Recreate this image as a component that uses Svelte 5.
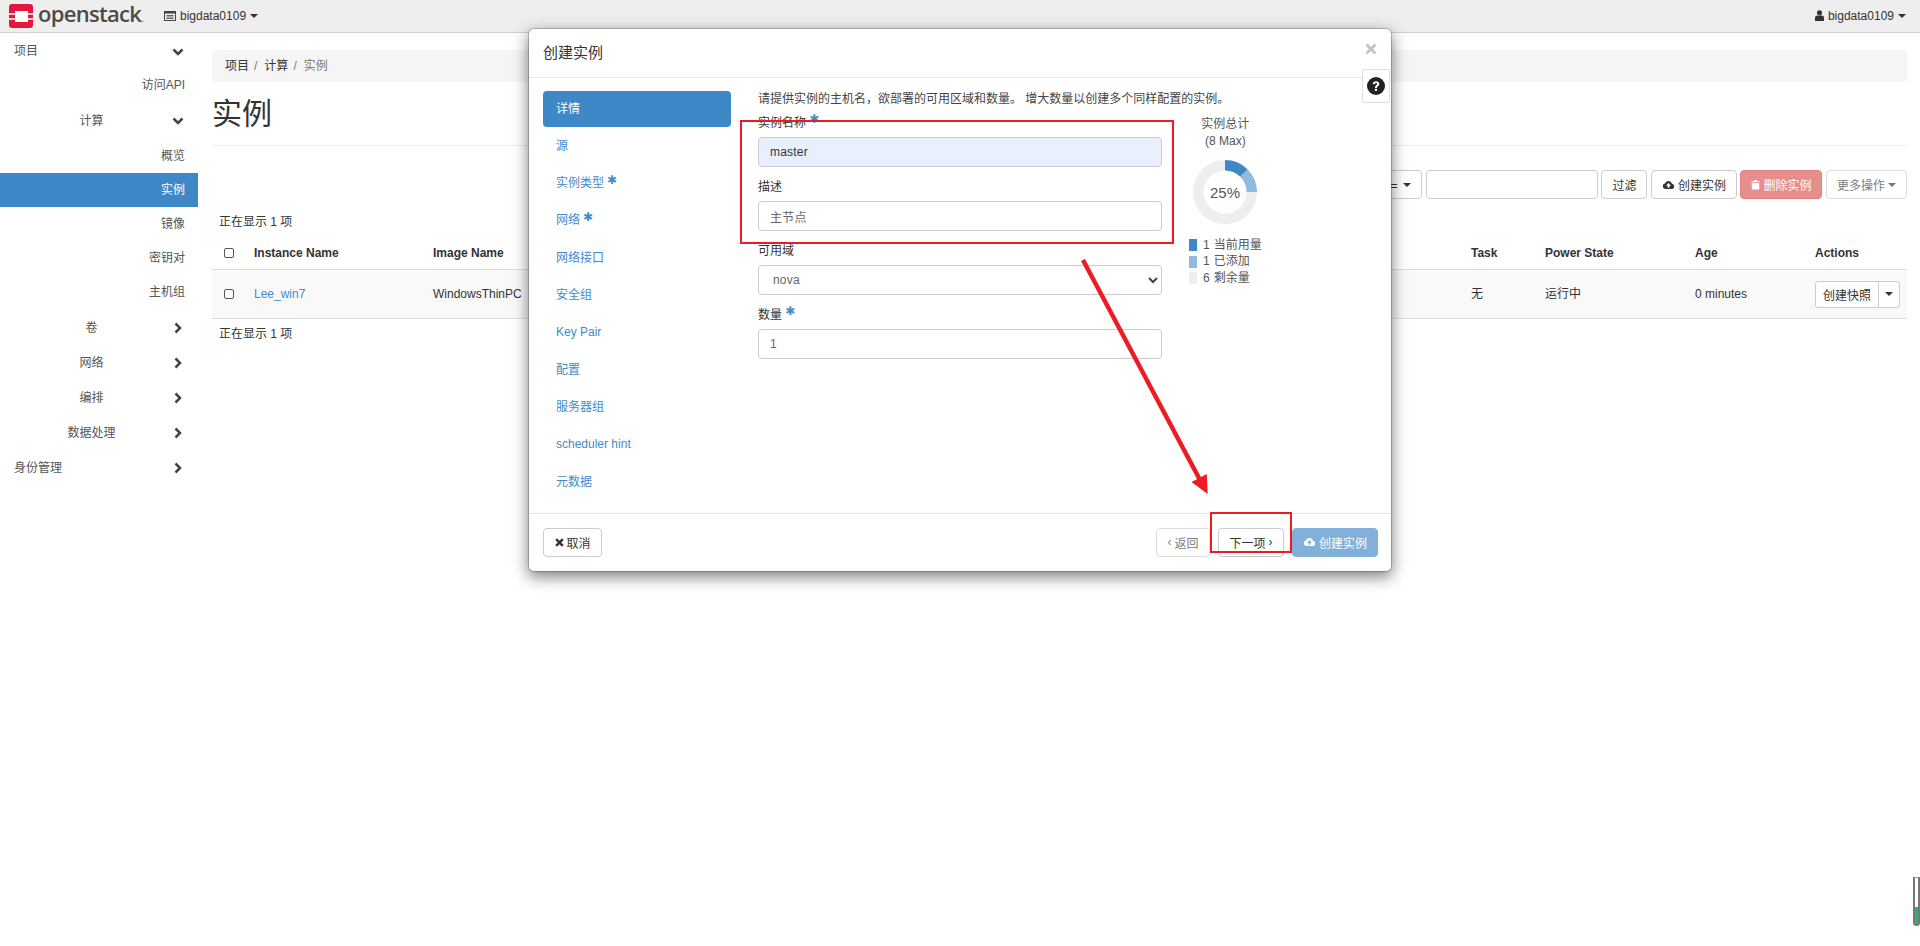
<script lang="ts">
	const sideItems = [
		{ label: '项目', level: 0, open: true },
		{ label: '访问API', level: 2 },
		{ label: '计算', level: 1, open: true },
		{ label: '概览', level: 2, first: true },
		{ label: '实例', level: 2, active: true },
		{ label: '镜像', level: 2 },
		{ label: '密钥对', level: 2 },
		{ label: '主机组', level: 2 },
		{ label: '卷', level: 1 },
		{ label: '网络', level: 1 },
		{ label: '编排', level: 1 },
		{ label: '数据处理', level: 1 },
		{ label: '身份管理', level: 0 }
	];

	const steps = [
		{ label: '详情', active: true },
		{ label: '源' },
		{ label: '实例类型', required: true },
		{ label: '网络', required: true },
		{ label: '网络接口' },
		{ label: '安全组' },
		{ label: 'Key Pair' },
		{ label: '配置' },
		{ label: '服务器组' },
		{ label: 'scheduler hint' },
		{ label: '元数据' }
	];

	const legend = [
		{ n: 1, label: '当前用量', color: '#3f88c8' },
		{ n: 1, label: '已添加', color: '#8fbbe0' },
		{ n: 6, label: '剩余量', color: '#eeeeee' }
	];

	const cloudPath = 'M1 8.5C1 6.8 2.2 5.5 3.8 5.3 4.3 3.4 6 2 8 2c2.100 0 3.800 1.500 4.200 3.500C13.800 5.700 15 7 15 8.700 15 10.500 13.500 12 11.700 12H4.300C2.500 12 1 10.400 1 8.500Z';
</script>

{#snippet cloud()}
	<svg viewBox="0 0 16 14" width="13" height="12">
		<path d={cloudPath} fill="currentColor" />
		<path d="M8 4.500 11 7.800H9.100V10.500H6.900V7.800H5Z" fill="var(--cut, #fff)" />
	</svg>
{/snippet}

<div class="page">
	<header class="navbar">
		<div class="logo">
			<svg viewBox="0 0 24 24" width="24" height="24">
				<rect width="24" height="24" rx="3" fill="#e3173e" />
				<rect x="6" y="7" width="13" height="11" fill="#fff" />
				<rect x="0" y="9.250" width="6" height="1.500" fill="#fff" />
				<rect x="0" y="14.250" width="6" height="1.500" fill="#fff" />
				<rect x="19" y="9.250" width="5" height="1.500" fill="#fff" />
				<rect x="19" y="14.250" width="5" height="1.500" fill="#fff" />
			</svg>
			<span class="logo-text">openstack<small>.</small></span>
		</div>
		<div class="project-pick">
			<svg viewBox="0 0 12 10" width="12" height="10">
				<rect x="0.500" y="0.500" width="11" height="9" fill="none" stroke="#444" />
				<rect x="0.500" y="0.500" width="11" height="2" fill="#444" />
				<path d="M2.500 4.500h7M2.500 6h7M2.500 7.500h7" stroke="#444" stroke-width="0.800" />
			</svg>
			<span>bigdata0109</span>
			<i class="caret"></i>
		</div>
		<div class="user-pick">
			<svg viewBox="0 0 10 12" width="9" height="11">
				<circle cx="5" cy="3" r="2.800" fill="#333" />
				<path d="M0 12V8.500C0 7 1.500 6 2.800 6h4.400C8.500 6 10 7 10 8.500V12Z" fill="#333" />
			</svg>
			<span>bigdata0109</span>
			<i class="caret"></i>
		</div>
	</header>

	<div class="layout">
		<nav class="sidebar">
			{#each sideItems as item}
				<div
					class="side-row level-{item.level}"
					class:active={item.active}
					class:first={item.first}
				>
					<span class="side-label">{item.label}</span>
					{#if item.level < 2}
						<svg class="chev" viewBox="0 0 12 12" width="12" height="12">
							{#if item.open}
								<path d="M1.500 3.500l4.500 4.500 4.500-4.500" fill="none" stroke="#444" stroke-width="2.500" />
							{:else}
								<path d="M3.500 1.500l4.500 4.500-4.500 4.500" fill="none" stroke="#444" stroke-width="2.500" />
							{/if}
						</svg>
					{/if}
				</div>
			{/each}
		</nav>

		<main class="content">
			<ol class="crumbs">
				<li>项目<span class="sep">/</span></li>
				<li>计算<span class="sep">/</span></li>
				<li class="current">实例</li>
			</ol>
			<div class="page-header"><h1>实例</h1></div>

			<div class="toolbar">
				<button class="btn filter-pick">实例名称 = <i class="caret"></i></button>
				<input class="filter" type="text" />
				<button class="btn">过滤</button>
				<button class="btn">{@render cloud()}创建实例</button>
				<button class="btn danger" disabled>
					<svg viewBox="0 0 12 13" width="9" height="11">
						<path d="M1 4h10v8a1 1 0 0 1-1 1H2a1 1 0 0 1-1-1ZM0 2h4V0.500h4V2h4v1H0Z" fill="#fff" />
					</svg>
					删除实例
				</button>
				<button class="btn" disabled>更多操作<i class="caret"></i></button>
			</div>

			<p class="count first-count">正在显示 1 项</p>
			<table>
				<colgroup>
					<col class="c-check" />
					<col class="c-name" />
					<col />
					<col class="c-task" />
					<col class="c-power" />
					<col class="c-age" />
					<col class="c-actions" />
				</colgroup>
				<thead>
					<tr>
						<th><input class="check" type="checkbox" /></th>
						<th>Instance Name</th>
						<th>Image Name</th>
						<th>Task</th>
						<th>Power State</th>
						<th>Age</th>
						<th>Actions</th>
					</tr>
				</thead>
				<tbody>
					<tr>
						<td><input class="check" type="checkbox" /></td>
						<td><a href="#instance">Lee_win7</a></td>
						<td>WindowsThinPC</td>
						<td>无</td>
						<td>运行中</td>
						<td>0 minutes</td>
						<td>
							<div class="split">
								<button class="btn">创建快照</button>
								<button class="btn toggle" aria-label="更多"><i class="caret"></i></button>
							</div>
						</td>
					</tr>
				</tbody>
			</table>
			<p class="count last-count">正在显示 1 项</p>
		</main>
	</div>

	<section class="modal">
		<div class="modal-head">
			<h4>创建实例</h4>
			<svg class="close" viewBox="0 0 12 12" width="12" height="12">
				<path d="M1.500 1.500l9 9M10.500 1.500l-9 9" stroke="#c4c4c4" stroke-width="3" />
			</svg>
		</div>

		<button class="help" aria-label="帮助">
			<svg viewBox="0 0 18 18" width="18" height="18">
				<circle cx="9" cy="9" r="9" fill="#222" />
				<path d="M5.800 7C6 5 7.400 4.200 9.100 4.200c1.800 0 3.200 1 3.200 2.700 0 2.300-2.400 2.200-2.400 4H8V10.500C8 8.200 10.100 8.200 10.100 7c0-.6-.4-1-1.100-1C8.300 6 7.900 6.500 7.800 7.300Z" fill="#fff" />
				<rect x="7.900" y="11.800" width="2.100" height="2.100" fill="#fff" />
			</svg>
		</button>

		<div class="modal-body">
			<ul class="steps">
				{#each steps as step}
					<li class:active={step.active}>
						{step.label}
						{#if step.required}<span class="req">✱</span>{/if}
					</li>
				{/each}
			</ul>

			<div class="form-col">
				<p class="intro">请提供实例的主机名&#65292;欲部署的可用区域和数量。 增大数量以创建多个同样配置的实例。</p>
				<div class="group">
					<label for="f-name">实例名称 <span class="req">✱</span></label>
					<input id="f-name" class="autofilled" type="text" value="master" />
				</div>
				<div class="group">
					<label for="f-desc">描述</label>
					<input id="f-desc" type="text" value="主节点" />
				</div>
				<div class="group">
					<label for="f-zone">可用域</label>
					<div class="select-wrap">
						<select id="f-zone"><option>nova</option></select>
						<svg viewBox="0 0 12 12" width="12" height="12">
							<path d="M2 4l4 4 4-4" fill="none" stroke="#444" stroke-width="2" />
						</svg>
					</div>
				</div>
				<div class="group">
					<label for="f-count">数量 <span class="req">✱</span></label>
					<input id="f-count" type="text" value="1" />
				</div>
			</div>

			<aside class="quota">
				<div class="quota-title">实例总计<br />(8 Max)</div>
				<div class="donut">
					<svg viewBox="0 0 64 64" width="64" height="64">
						<circle cx="32" cy="32" r="26.750" fill="none" stroke="#eeeeee" stroke-width="10.500" />
						<path d="M32 5.250A26.750 26.750 0 0 1 50.900 13.100" fill="none" stroke="#3f88c8" stroke-width="10.500" />
						<path d="M50.900 13.100A26.750 26.750 0 0 1 58.750 32" fill="none" stroke="#8fbbe0" stroke-width="10.500" />
					</svg>
					<span>25%</span>
				</div>
				<ul class="legend">
					{#each legend as row}
						<li>
							<i style="background:{row.color}"></i>
							<b>{row.n}</b>
							{row.label}
						</li>
					{/each}
				</ul>
			</aside>
		</div>

		<div class="modal-foot">
			<button class="btn wide">
				<svg viewBox="0 0 12 12" width="9" height="9">
					<path d="M1.500 1.500l9 9M10.500 1.500l-9 9" stroke="#333" stroke-width="3.200" />
				</svg>
				取消
			</button>
			<div class="foot-right">
				<button class="btn wide" disabled><span>‹</span>返回</button>
				<button class="btn wide">下一项<span>›</span></button>
				<button class="btn primary" disabled style="--cut:#3f88c8">{@render cloud()}创建实例</button>
			</div>
		</div>
	</section>

	<svg class="marks" viewBox="0 0 1920 946" width="1920" height="946">
		<rect x="741" y="121" width="432" height="122" fill="none" stroke="#ed1c24" stroke-width="2" />
		<rect x="1211" y="513" width="80" height="39" fill="none" stroke="#ed1c24" stroke-width="2" />
		<path d="M1083 260 1200 480" stroke="#ed1c24" stroke-width="4.500" fill="none" />
		<path d="M1207.700 494 1191.500 482 1206.800 474Z" fill="#ed1c24" />
	</svg>

	<div class="scroll-thumb"><span></span></div>
</div>

<style>
	:global(body) {
		margin: 0;
		background: #fff;
	}

	.page {
		position: relative;
		width: 1920px;
		height: 946px;
		overflow: hidden;
		font-family: 'Liberation Sans', 'Noto Sans CJK SC', sans-serif;
		font-size: 12px;
		line-height: 1.4;
		color: #333;
	}

	button,
	input,
	select {
		font-family: inherit;
		font-size: 12px;
	}

	.caret {
		display: inline-block;
		width: 0;
		height: 0;
		border-top: 4px solid currentColor;
		border-left: 4px solid transparent;
		border-right: 4px solid transparent;
		vertical-align: middle;
	}

	/* top bar */
	.navbar {
		display: flex;
		align-items: center;
		height: 32px;
		background: #eeeeee;
		border-bottom: 1px solid #cfcfcf;
		padding: 0 14px 0 9px;
	}

	.logo {
		display: flex;
		align-items: center;
		gap: 5px;
		width: 155px;
	}

	.logo-text {
		font-family: 'Open Sans', sans-serif;
		font-size: 22px;
		font-weight: 600;
		line-height: 32px;
		letter-spacing: -0.7px;
		color: #4d4a48;
	}

	.logo-text small {
		font-size: 8px;
	}

	.project-pick,
	.user-pick {
		display: flex;
		align-items: center;
		gap: 4px;
		color: #333;
	}

	.user-pick {
		margin-left: auto;
	}

	/* side nav */
	.layout {
		display: flex;
	}

	.sidebar {
		flex: 0 0 198px;
		width: 198px;
	}

	.side-row {
		position: relative;
		display: flex;
		align-items: center;
		height: 35px;
		box-sizing: border-box;
		padding-top: 4px;
		color: #555;
	}

	.side-row:first-child {
		padding-top: 1px;
	}

	.side-row.level-2 {
		height: 34px;
		justify-content: flex-end;
		padding: 1px 13px 0 0;
	}

	.side-row.first {
		margin-top: 2px;
	}

	.side-row.level-0 {
		padding-left: 14px;
	}

	.side-row.level-1 .side-label {
		width: 183px;
		text-align: center;
	}

	.side-row.active {
		background: #3f88c8;
		color: #fff;
	}

	.chev {
		position: absolute;
		left: 172px;
		top: 50%;
		margin-top: -5px;
	}

	/* main area */
	.content {
		flex: 1;
		margin: 0 13px 0 14px;
		min-width: 0;
	}

	.crumbs {
		display: flex;
		align-items: center;
		list-style: none;
		height: 32px;
		margin: 17px 0 0;
		padding: 0 13px;
		background: #f5f5f5;
		border-radius: 4px;
	}

	.crumbs li {
		margin-right: 7px;
	}

	.crumbs .sep {
		margin: 0 0 0 5px;
		color: #777;
	}

	.crumbs .current {
		color: #777;
	}

	.page-header {
		height: 63px;
		border-bottom: 1px solid #eeeeee;
	}

	h1 {
		margin: 0;
		padding-top: 11px;
		font-size: 30px;
		font-weight: 400;
		line-height: 42px;
	}

	.toolbar {
		display: flex;
		justify-content: flex-end;
		gap: 3.5px;
		margin-top: 24px;
	}

	.btn {
		display: inline-flex;
		align-items: center;
		gap: 3px;
		height: 29px;
		padding: 0 10px;
		border: 1px solid #ccc;
		border-radius: 4px;
		background: #fff;
		color: #333;
		white-space: nowrap;
	}

	.btn.filter-pick {
		gap: 6px;
	}

	.btn.wide {
		padding: 0 10.500px;
	}

	.btn:disabled {
		opacity: 0.65;
	}

	.btn.danger {
		background: #d9534f;
		border-color: #d43f3a;
		color: #fff;
	}

	.btn.primary {
		background: #3f88c8;
		border-color: #3f88c8;
		color: #fff;
	}

	.filter {
		width: 172px;
		height: 29px;
		box-sizing: border-box;
		border: 1px solid #ccc;
		border-radius: 4px;
	}

	.count {
		margin: 0 0 0 7px;
		line-height: 16px;
	}

	.first-count {
		margin-top: 15px;
	}

	.last-count {
		margin-top: 7px;
	}

	table {
		width: 100%;
		margin-top: 7px;
		border-collapse: collapse;
		table-layout: fixed;
	}

	.c-check {
		width: 34px;
	}

	.c-name {
		width: 179px;
	}

	.c-task {
		width: 74px;
	}

	.c-power {
		width: 150px;
	}

	.c-age {
		width: 128px;
	}

	.c-actions {
		width: 92px;
	}

	th {
		height: 32px;
		padding: 0 8px;
		text-align: left;
		font-weight: 700;
		border-bottom: 1px solid #ddd;
	}

	td {
		height: 48px;
		padding: 0 8px;
		background: #f9f9f9;
		border-bottom: 1px solid #ddd;
		vertical-align: middle;
		white-space: nowrap;
	}

	th:first-child,
	td:first-child {
		padding: 0 0 0 12px;
	}

	td:last-child,
	th:last-child {
		padding: 0;
	}

	.check {
		display: block;
		width: 10px;
		height: 10px;
		margin: 0;
		appearance: none;
		box-sizing: border-box;
		background: #fff;
		border: 1px solid #555;
		border-radius: 2px;
	}

	td a {
		color: #428bca;
		text-decoration: none;
	}

	.split {
		display: flex;
	}

	.split .btn {
		height: 27px;
		padding: 0 7px;
		border-radius: 3px 0 0 3px;
	}

	.split .toggle {
		padding: 0 6px;
		margin-left: -1px;
		border-radius: 0 3px 3px 0;
	}

	/* dialog */
	.modal {
		position: absolute;
		left: 528px;
		top: 28px;
		width: 864px;
		box-sizing: border-box;
		background: #fff;
		border: 1px solid rgba(0, 0, 0, 0.2);
		border-radius: 6px;
		background-clip: padding-box;
		box-shadow: 0 5px 15px rgba(0, 0, 0, 0.5);
	}

	.modal-head {
		position: relative;
		height: 48px;
		border-bottom: 1px solid #e5e5e5;
	}

	h4 {
		margin: 0;
		padding: 13px 0 0 14px;
		font-size: 15px;
		font-weight: 400;
		line-height: 21px;
		color: #333;
	}

	.close {
		position: absolute;
		top: 14px;
		right: 14px;
	}

	.help {
		position: absolute;
		top: 40px;
		right: 1px;
		display: flex;
		align-items: center;
		justify-content: center;
		width: 28px;
		height: 34px;
		padding: 0;
		background: #fff;
		border: 1px solid #ddd;
		border-radius: 2px;
	}

	.modal-body {
		display: flex;
		padding: 13px 13px 13px 14px;
	}

	.steps {
		flex: 0 0 188px;
		display: grid;
		grid-auto-rows: 36px;
		row-gap: 1.3px;
		list-style: none;
		margin: 0 27px 0 0;
		padding: 0;
		color: #428bca;
	}

	.steps li {
		display: flex;
		align-items: center;
		gap: 3px;
		padding-left: 13px;
		border-radius: 4px;
	}

	.steps li.active {
		background: #3f88c8;
		color: #fff;
	}

	.req {
		position: relative;
		top: -4px;
		font-family: 'DejaVu Sans', sans-serif;
		font-size: 12px;
		font-weight: 700;
		line-height: 1;
		color: #428bca;
	}

	.form-col {
		flex: 0 0 404px;
		min-width: 0;
		margin-right: 27px;
	}

	.intro {
		margin: 0 0 8px;
		height: 16px;
		line-height: 16px;
		color: #444;
		white-space: nowrap;
	}

	.group {
		height: 64px;
	}

	.group label {
		display: block;
		height: 16px;
		margin-bottom: 6px;
		line-height: 16px;
		color: #333;
	}

	.group input,
	.group select {
		display: block;
		width: 100%;
		height: 30px;
		box-sizing: border-box;
		padding: 0 11px;
		border: 1px solid #ccc;
		border-radius: 4px;
		background: #fff;
		color: #666;
		letter-spacing: 0.2px;
		appearance: none;
	}

	.group select {
		padding-left: 14px;
	}

	.group input.autofilled {
		background: #e8f0fe;
		color: #333;
	}

	.select-wrap {
		position: relative;
	}

	.select-wrap svg {
		position: absolute;
		top: 9px;
		right: 3px;
	}

	.quota {
		flex: 0 0 72px;
		color: #555;
	}

	.quota-title {
		margin: 25px 0 0 0;
		text-align: center;
		line-height: 17px;
	}

	.donut {
		position: relative;
		width: 64px;
		height: 64px;
		margin: 10px 0 0 4px;
	}

	.donut svg {
		display: block;
	}

	.donut span {
		position: absolute;
		inset: 0;
		display: flex;
		align-items: center;
		justify-content: center;
		font-size: 15px;
	}

	.legend {
		list-style: none;
		margin: 13px 0 0;
		padding: 0;
		white-space: nowrap;
	}

	.legend li {
		display: flex;
		align-items: center;
		height: 16.500px;
	}

	.legend i {
		width: 8px;
		height: 12px;
		margin-right: 6px;
	}

	.legend b {
		font-weight: 400;
		margin-right: 4px;
	}

	.modal-foot {
		display: flex;
		justify-content: space-between;
		padding: 14px 13px 14px 14px;
		border-top: 1px solid #e5e5e5;
	}

	.foot-right {
		display: flex;
		gap: 8px;
	}

	/* annotation layer */
	.marks {
		position: absolute;
		left: 0;
		top: 0;
		pointer-events: none;
	}

	.scroll-thumb {
		position: absolute;
		left: 1913px;
		top: 877px;
		width: 7px;
		height: 49px;
		box-sizing: border-box;
		border: 2px solid #777;
		border-top: 1px solid #999;
		border-radius: 0 0 4px 4px;
		display: flex;
		align-items: flex-end;
		justify-content: center;
	}

	.scroll-thumb span {
		width: 3px;
		height: 17px;
		background: #22b573;
	}
</style>
